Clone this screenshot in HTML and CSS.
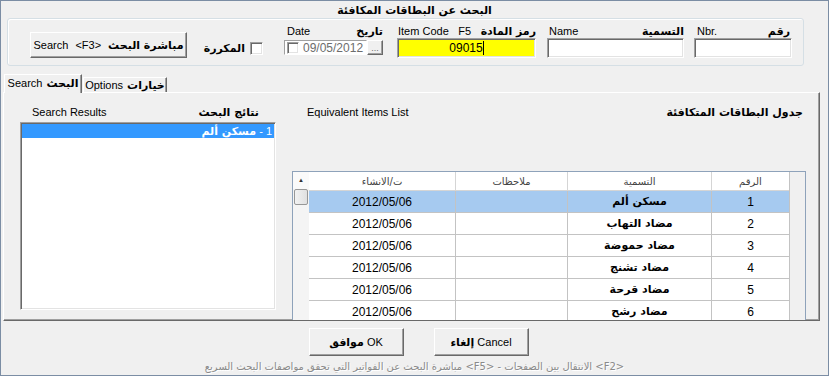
FILE: index.html
```html
<!DOCTYPE html>
<html>

<head>
    <title>البحث عن البطاقات المكافئة</title>
    <link rel="stylesheet" href="styles.css">
</head>

<body>
    <div class="window">
        <div class="title ar">البحث عن البطاقات المكافئة</div>

        <div class="criteria">
            <button class="btn btn-search"><span>Search</span><span>&lt;F3&gt;</span><span class="ar">مباشرة البحث</span></button>

            <div class="dup">
                <span class="ar">المكررة</span>
                <span class="check"></span>
            </div>

            <div class="field date-field">
                <div class="field-label"><span>Date</span><span class="ar">تاريخ</span></div>
                <div class="date-box">
                    <div class="date-input">
                        <span class="check"></span>
                        <span class="date-text">09/05/2012</span>
                    </div>
                    <span class="btn dots">...</span>
                </div>
            </div>

            <div class="field code-field">
                <div class="field-label"><span>Item Code</span><span>F5</span><span class="ar">رمز المادة</span></div>
                <div class="text-input yellow"><span>09015</span><span class="caret"></span></div>
            </div>

            <div class="field name-field">
                <div class="field-label"><span>Name</span><span class="ar">التسمية</span></div>
                <div class="text-input"></div>
            </div>

            <div class="field nbr-field">
                <div class="field-label"><span>Nbr.</span><span class="ar">رقم</span></div>
                <div class="text-input"></div>
            </div>
        </div>

        <div class="tabs">
            <div class="tab active">Search <span class="ar">البحث</span></div>
            <div class="tab">Options <span class="ar">خيارات</span></div>
        </div>

        <div class="tab-page">
            <div class="results">
                <div class="col-label"><span>Search Results</span><span class="ar">نتائج البحث</span></div>
                <div class="list-box">
                    <div class="list-item selected" dir="rtl">1 - <span class="ar">مسكن ألم</span></div>
                </div>
            </div>

            <div class="equiv">
                <div class="col-label"><span>Equivalent Items List</span><span class="ar">جدول البطاقات المتكافئة</span></div>
                <div class="grid">
                    <div class="scrollbar">
                        <div class="scroll-up">&#9650;</div>
                        <div class="scroll-thumb"></div>
                    </div>
                    <table class="items" dir="rtl">
                        <thead>
                            <tr>
                                <th class="c-num">الرقم</th>
                                <th class="c-name">التسمية</th>
                                <th class="c-notes">ملاحظات</th>
                                <th class="c-date">ت/الانشاء</th>
                            </tr>
                        </thead>
                        <tbody>
                            <tr class="selected">
                                <td>1</td>
                                <td class="ar">مسكن ألم</td>
                                <td></td>
                                <td>2012/05/06</td>
                            </tr>
                            <tr>
                                <td>2</td>
                                <td class="ar">مضاد التهاب</td>
                                <td></td>
                                <td>2012/05/06</td>
                            </tr>
                            <tr>
                                <td>3</td>
                                <td class="ar">مضاد حموضة</td>
                                <td></td>
                                <td>2012/05/06</td>
                            </tr>
                            <tr>
                                <td>4</td>
                                <td class="ar">مضاد تشنج</td>
                                <td></td>
                                <td>2012/05/06</td>
                            </tr>
                            <tr>
                                <td>5</td>
                                <td class="ar">مضاد قرحة</td>
                                <td></td>
                                <td>2012/05/06</td>
                            </tr>
                            <tr>
                                <td>6</td>
                                <td class="ar">مضاد رشح</td>
                                <td></td>
                                <td>2012/05/06</td>
                            </tr>
                        </tbody>
                    </table>
                    <div class="grid-filler"></div>
                </div>
            </div>
        </div>

        <div class="footer">
            <div class="footer-buttons">
                <button class="btn btn-dialog"><span class="ar">موافق</span> OK</button>
                <button class="btn btn-dialog"><span class="ar">إلغاء</span> Cancel</button>
            </div>
            <div class="status" dir="rtl">&lt;F2&gt; الانتقال بين الصفحات - &lt;F5&gt; مباشرة البحث عن الفواتير التي تحقق مواصفات البحث السريع</div>
        </div>
    </div>
</body>

</html>
```

FILE: styles.css
```css
body {
    margin: 0;
    background: #f0f0f0;
}

.window {
    width: 829px;
    height: 376px;
    box-sizing: border-box;
    border: 1px solid #7b8da4;
    background: #f0f0f0;
    font: 11px "Liberation Sans", "DejaVu Sans", sans-serif;
    color: #000;
    overflow: hidden;
}

.ar {
    font-family: "DejaVu Sans", sans-serif;
    font-weight: bold;
    font-size: 11px;
}

.title {
    height: 17px;
    line-height: 19px;
    text-align: center;
}

/* top search criteria box */
.criteria {
    display: flex;
    align-items: flex-start;
    width: 797px;
    height: 48px;
    margin-left: 6px;
    box-sizing: border-box;
    border: 1px solid #d5dfe5;
    border-radius: 3px;
    box-shadow: inset 1px 1px 0 #fff;
}

.btn {
    box-sizing: border-box;
    background: #f0f0f0;
    border: 1px solid;
    border-color: #fff #696969 #696969 #fff;
    box-shadow: inset -1px -1px 0 #a0a0a0;
    font: 11px "Liberation Sans", "DejaVu Sans", sans-serif;
    color: #000;
    padding: 0;
    cursor: pointer;
}

.btn-search {
    display: flex;
    align-items: center;
    justify-content: center;
    gap: 7px;
    width: 157px;
    height: 26px;
    margin: 13px 0 0 22px;
}

.check {
    display: inline-block;
    flex: none;
    width: 13px;
    height: 13px;
    box-sizing: border-box;
    background: #fff;
    border: 1px solid;
    border-color: #a0a0a0 #fff #fff #a0a0a0;
    box-shadow: inset 1px 1px 0 #696969, inset -1px -1px 0 #e3e3e3;
}

.dup {
    display: flex;
    align-items: center;
    justify-content: flex-end;
    gap: 5px;
    width: 50px;
    height: 13px;
    margin: 23px 0 0 26px;
    white-space: nowrap;
}

.field {
    display: flex;
    flex-direction: column;
    margin-top: 5px;
}

.field-label {
    display: flex;
    justify-content: space-between;
    align-items: center;
    height: 14px;
    white-space: nowrap;
}

.date-field {
    width: 99px;
    margin-left: 21px;
}

.date-field .field-label {
    padding-left: 3px;
}

.date-box {
    display: flex;
    height: 15px;
    margin-top: 2px;
}

.date-input {
    display: flex;
    align-items: center;
    gap: 4px;
    width: 83px;
    box-sizing: border-box;
    padding-left: 2px;
    background: #fff;
    border: 1px solid;
    border-color: #a0a0a0 #fff #fff #a0a0a0;
}

.date-input .check {
    width: 12px;
    height: 12px;
}

.date-text {
    color: #6d6d6d;
    font-size: 12px;
}

.dots {
    display: flex;
    align-items: flex-end;
    justify-content: center;
    width: 16px;
    height: 15px;
    font-size: 9px;
    line-height: 11px;
    color: #6d6d6d;
}

.text-input {
    display: flex;
    align-items: center;
    justify-content: center;
    height: 20px;
    box-sizing: border-box;
    background: #fff;
    border: 1px solid;
    border-color: #a0a0a0 #fff #fff #a0a0a0;
    box-shadow: inset 1px 1px 0 #696969, inset -1px -1px 0 #e3e3e3;
    font-size: 12px;
}

.text-input.yellow {
    background: #ffff00;
}

.caret {
    width: 1px;
    height: 14px;
    background: #000;
}

.code-field {
    width: 139px;
    margin-left: 14px;
}

.code-field .field-label {
    padding-left: 1px;
}

.name-field {
    width: 137px;
    margin-left: 11px;
}

.name-field .field-label {
    padding-left: 2px;
}

.nbr-field {
    width: 98px;
    margin-left: 10px;
}

.nbr-field .field-label {
    padding: 0 2px 0 3px;
}

/* tabs */
.tabs {
    display: flex;
    align-items: flex-end;
    height: 18px;
    margin: 8px 0 0 3px;
    position: relative;
    z-index: 1;
}

.tab {
    display: flex;
    align-items: center;
    justify-content: center;
    gap: 4px;
    width: 84px;
    height: 15px;
    box-sizing: border-box;
    border: 1px solid;
    border-bottom: none;
    border-color: #fff #696969 #696969 #fff;
    box-shadow: inset -1px 0 0 #a0a0a0;
    margin-left: 1px;
    white-space: nowrap;
}

.tab.active {
    width: 78px;
    height: 19px;
    margin-bottom: -1px;
    margin-left: 0;
    padding-bottom: 2px;
    background: #f0f0f0;
}

.tab-page {
    display: flex;
    width: 817px;
    height: 229px;
    margin-left: 2px;
    box-sizing: border-box;
    border: 1px solid;
    border-color: #fff #696969 #696969 #fff;
    box-shadow: inset -1px -1px 0 #a0a0a0;
    overflow: hidden;
}

.col-label {
    display: flex;
    justify-content: space-between;
    align-items: center;
    height: 14px;
}

.results {
    width: 256px;
    margin: 12px 0 0 16px;
}

.results .col-label {
    padding: 0 17px 0 12px;
}

.list-box {
    height: 188px;
    margin-top: 3px;
    box-sizing: border-box;
    background: #fff;
    border: 1px solid;
    border-color: #a0a0a0 #fff #fff #a0a0a0;
    box-shadow: inset 1px 1px 0 #696969, inset -1px -1px 0 #e3e3e3;
    padding: 1px 1px 0 1px;
}

.list-item {
    height: 14px;
    line-height: 14px;
    padding-right: 2px;
}

.list-item.selected {
    background: #3399ff;
    color: #fff;
}

.equiv {
    width: 514px;
    margin: 12px 0 0 16px;
}

.equiv .col-label {
    padding: 0 3px 0 15px;
}

.grid {
    display: flex;
    height: 160px;
    margin-top: 52px;
    box-sizing: border-box;
    border: 1px solid #8ea2ba;
    border-bottom: none;
    background: #f0f0f0;
}

.scrollbar {
    width: 16px;
    background: #f4f4f4;
}

.scroll-up {
    height: 17px;
    font-size: 6px;
    line-height: 17px;
    text-align: center;
    color: #333;
    background: #fafafa;
}

.scroll-thumb {
    width: 14px;
    height: 16px;
    margin: 0 1px;
    box-sizing: border-box;
    border: 1px solid #979797;
    border-radius: 2px;
    background: linear-gradient(to right, #f2f2f2, #e0e0e0);
}

.items {
    width: 478px;
    border-collapse: collapse;
    table-layout: fixed;
    background: #fff;
    align-self: flex-start;
}

.items th {
    height: 18px;
    padding: 0;
    font-family: "DejaVu Sans", sans-serif;
    font-size: 10px;
    font-weight: normal;
    color: #444;
    border-right: 1px solid #d5d5d5;
    border-bottom: 1px solid #d5d5d5;
    background: #fff;
}

.items th:first-child {
    border-right: none;
}

.items td {
    height: 21px;
    padding: 0;
    text-align: center;
    border-right: 1px solid #c3c3c3;
    border-bottom: 1px solid #c3c3c3;
    font-size: 12px;
}

.items td.ar {
    font-size: 11px;
}

.items td:first-child {
    border-right: none;
}

.items tr.selected td {
    background: #a6caf0;
}

.c-num {
    width: 77px;
}

.c-name {
    width: 143px;
}

.c-notes {
    width: 111px;
}

.c-date {
    width: 146px;
}

.grid-filler {
    flex: 1;
    border-left: 1px solid #c3c3c3;
}

/* bottom buttons and hint */
.footer {
    display: flex;
    flex-direction: column;
    align-items: center;
}

.footer-buttons {
    display: flex;
    gap: 30px;
    margin: 7px 0 0 8px;
}

.btn-dialog {
    width: 95px;
    height: 28px;
}

.status {
    margin-top: 4px;
    height: 13px;
    line-height: 13px;
    font-family: "DejaVu Sans", sans-serif;
    font-size: 10px;
    color: #8a8a8a;
    text-shadow: 1px 1px 0 #fff;
}
```
